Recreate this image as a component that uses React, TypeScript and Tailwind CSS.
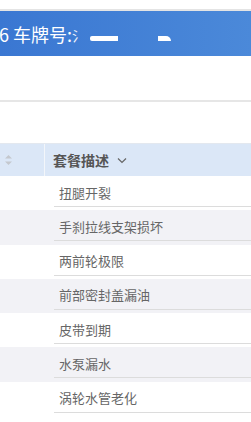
import React from 'react';

const rows = ['扭腿开裂', '手刹拉线支架损坏', '两前轮极限', '前部密封盖漏油', '皮带到期', '水泵漏水', '涡轮水管老化'];

const App = () => {
  return (
    <div className="w-[251px] h-[422px] overflow-hidden bg-white" style={{ fontFamily: '"Noto Sans CJK SC", "Noto Sans", sans-serif' }}>
      {/* 顶部 */}
      <div className="h-[9px]" />
      <div className="h-[2px] bg-[#e4e4e4]" />
      <div className="h-[45px] bg-gradient-to-r from-[#3a77d2] to-[#4b89d9] flex items-center text-white text-[18px] whitespace-nowrap">
        <span className="-ml-[1px] mt-[2px]">6 车牌号:</span>
        <span className="inline-block text-[14px] mt-[4px] opacity-90">氵</span>
        <span className="inline-block w-[28px] h-[5px] bg-white mt-[10px] ml-[4px] rounded-l-[2px]" />
        <span className="inline-block w-[13px] h-[5px] bg-white mt-[10px] ml-[40px] rounded-tr-[6px]" />
      </div>

      <div className="h-[44px]" />
      <div className="h-[2px] bg-[#e6e6e6]" />
      <div className="h-[41px]" />

      {/* 表头 */}
      <div className="flex h-[33px] bg-[#dbe7f7] border-t border-[#e3e8ef]">
        <div className="w-[45px] flex items-center pl-[4px] border-r border-[#f3f6fa]">
          <svg width="9" height="14" viewBox="0 0 9 14">
            <path d="M4.5 2 L8 5.5 L1 5.5 Z" fill="#c4c8ce" />
            <path d="M4.5 12 L8 8.5 L1 8.5 Z" fill="#c4c8ce" />
          </svg>
        </div>
        <div className="flex items-center pl-[8px] text-[14px] font-semibold text-[#555]">
          <span>套餐描述</span>
          <svg className="ml-[8px]" width="10" height="7" viewBox="0 0 10 7">
            <path d="M1 1.5 L5 5.5 L9 1.5" stroke="#666" strokeWidth="1.2" fill="none" />
          </svg>
        </div>
      </div>

      {/* 列表 */}
      {rows.map((r, i) => (
        <div key={r} className={`flex h-[34.3px] ${i % 2 === 1 ? 'bg-[#f2f2f6]' : 'bg-white'}`}>
          <div className="w-[54px] shrink-0" />
          <div className="flex-1 h-[31px] border-b border-[#dcdcdc] flex items-end pb-[4px] pl-[5px] text-[13px] text-[#666]">
            {r}
          </div>
        </div>
      ))}
    </div>
  );
};

export default App;
